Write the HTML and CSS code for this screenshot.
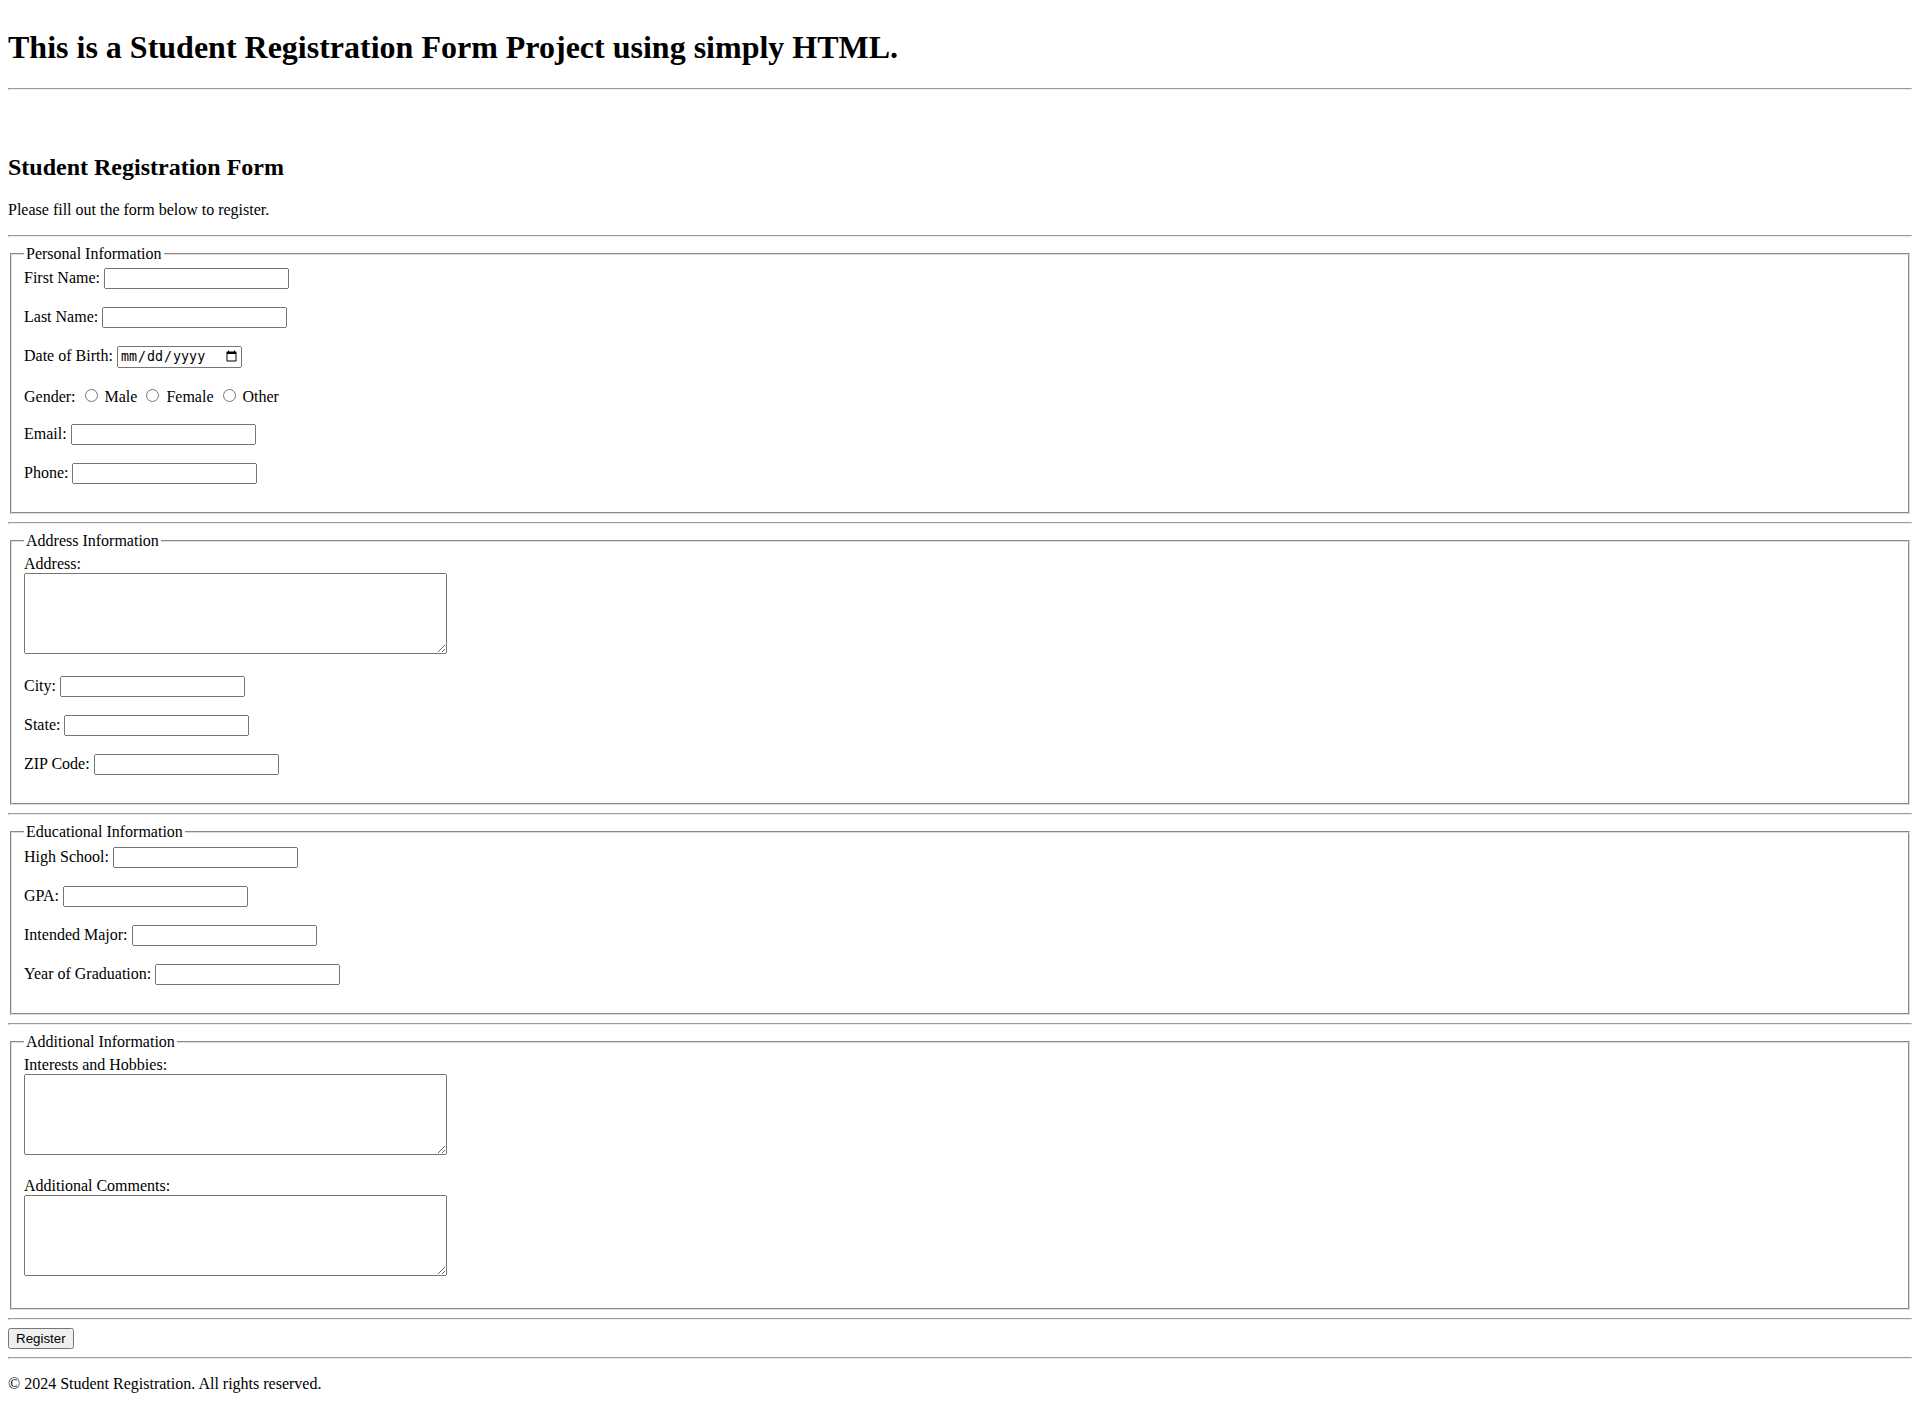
FILE: index.html
```html
<!DOCTYPE html>
<html lang="en">
<head>
<meta charset="UTF-8">
<title>Student Registration Form</title>
<link rel="stylesheet" href="styles.css">
</head>
<body class="page">
<header>
<h1 class="title">This is a Student Registration Form Project using simply HTML.</h1>
</header>
<hr class="rule">
<br><br>
<main>
<h2 class="subtitle">Student Registration Form</h2>
<p class="intro">Please fill out the form below to register.</p>
<hr class="rule">
<form class="form">
<fieldset class="group">
<legend class="legend">Personal Information</legend>
<label for="fn">First Name:</label>
<input class="field" type="text" id="fn"><br><br>
<label for="ln">Last Name:</label>
<input class="field" type="text" id="ln"><br><br>
<label for="dob">Date of Birth:</label>
<input class="field" type="date" id="dob"><br><br>
<label>Gender:</label>
<input type="radio" name="g" id="m"> <label for="m">Male</label>
<input type="radio" name="g" id="f"> <label for="f">Female</label>
<input type="radio" name="g" id="o"> <label for="o">Other</label><br><br>
<label for="em">Email:</label>
<input class="field" type="email" id="em"><br><br>
<label for="ph">Phone:</label>
<input class="field" type="tel" id="ph"><br><br>
</fieldset>
<hr class="rule">
<fieldset class="group">
<legend class="legend">Address Information</legend>
<label for="ad">Address:</label><br>
<textarea class="area" id="ad" rows="5" cols="50"></textarea><br><br>
<label for="ci">City:</label>
<input class="field" type="text" id="ci"><br><br>
<label for="st">State:</label>
<input class="field" type="text" id="st"><br><br>
<label for="zip">ZIP Code:</label>
<input class="field" type="text" id="zip"><br><br>
</fieldset>
<hr class="rule">
<fieldset class="group">
<legend class="legend">Educational Information</legend>
<label for="hs">High School:</label>
<input class="field" type="text" id="hs"><br><br>
<label for="gpa">GPA:</label>
<input class="field" type="text" id="gpa"><br><br>
<label for="maj">Intended Major:</label>
<input class="field" type="text" id="maj"><br><br>
<label for="yr">Year of Graduation:</label>
<input class="field" type="text" id="yr"><br><br>
</fieldset>
<hr class="rule">
<fieldset class="group">
<legend class="legend">Additional Information</legend>
<label for="ih">Interests and Hobbies:</label><br>
<textarea class="area" id="ih" rows="5" cols="50"></textarea><br><br>
<label for="ac">Additional Comments:</label><br>
<textarea class="area" id="ac" rows="5" cols="50"></textarea><br><br>
</fieldset>
<hr class="rule">
<input class="button" type="submit" value="Register">
</form>
</main>
<hr class="rule">
<footer>
<p class="copy">&copy; 2024 Student Registration. All rights reserved.</p>
</footer>
</body>
</html>
```
FILE: styles.css
```css
.page {
  font-family: "Liberation Serif", "Times New Roman", serif;
  color: #000;
  background: #fff;
}

.group {
  border: 2px groove #dddddd;
}
```
